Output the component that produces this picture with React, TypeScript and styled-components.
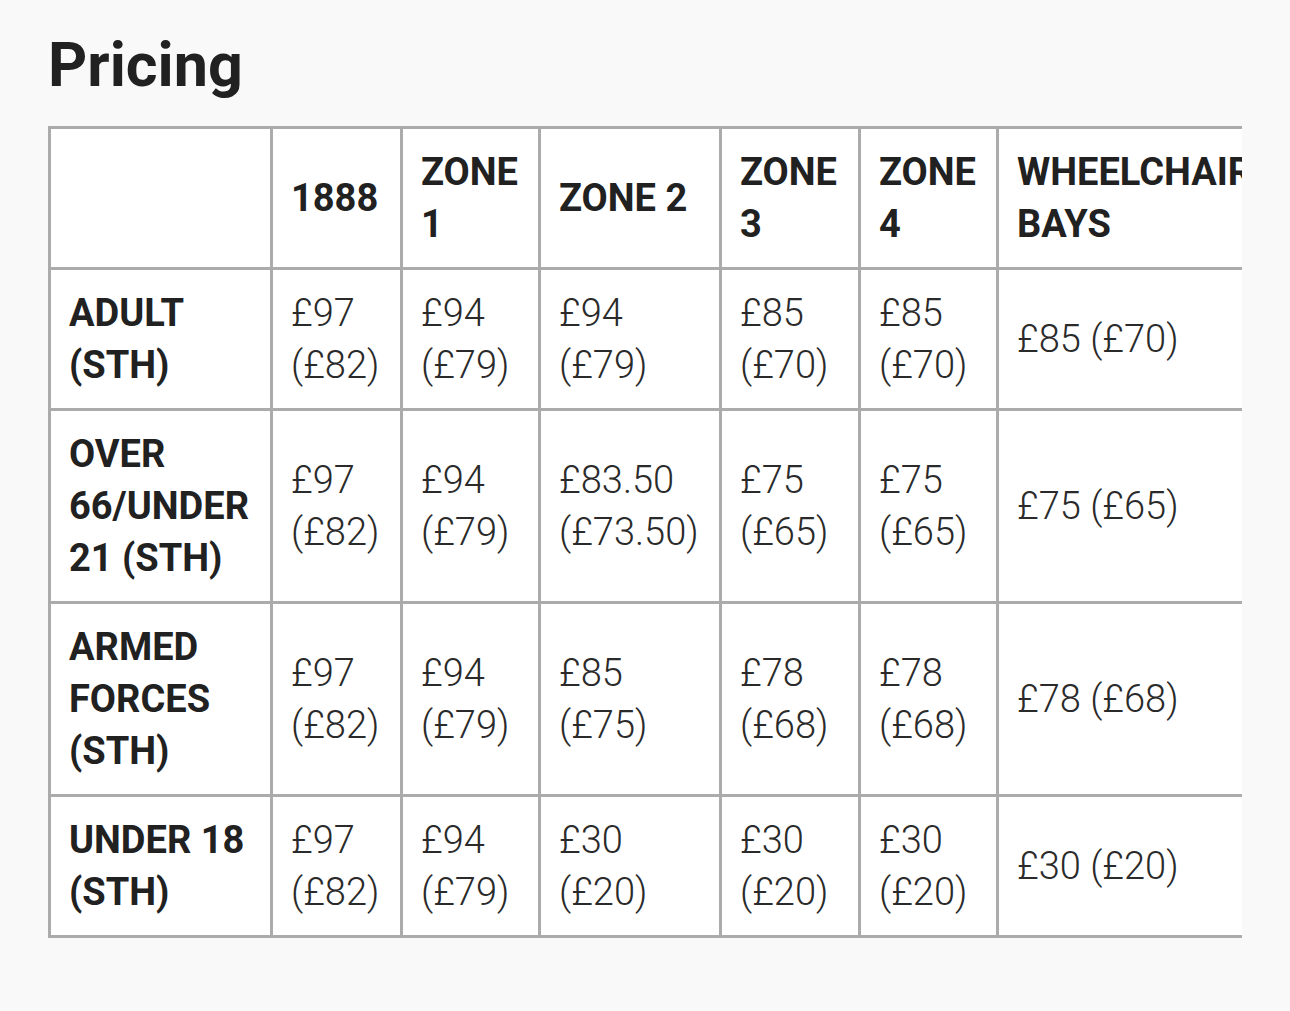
import React from "react";
import styled, { createGlobalStyle } from "styled-components";

const Global = createGlobalStyle`
  html, body { margin: 0; padding: 0; background: #f9f9f9; }
  body { font-family: Roboto, "Liberation Sans", Arial, sans-serif; color: #212121; }
`;

const Page = styled.div`
  padding: 28px 48px 0 48px;
`;

const Title = styled.h1`
  margin: 0 0 24px 0;
  font-family: Roboto, "Liberation Sans", sans-serif;
  font-weight: 700;
  font-size: 61px;
  line-height: 74px;
  color: #212121;
`;

const Scroller = styled.div`
  width: 1194px;
  overflow: hidden;
`;

const Table = styled.table`
  border-collapse: collapse;
  table-layout: fixed;
  width: 1248px;
  background: #ffffff;
`;

const Cell = styled.td<{ $head?: boolean }>`
  border: 3px solid #ababab;
  padding: 17px 18px;
  font-size: 38px;
  line-height: 52px;
  vertical-align: middle;
  text-align: left;
  font-weight: ${(p) => (p.$head ? 700 : 300)};
  color: ${(p) => (p.$head ? "#212121" : "#2a2a2a")};
  overflow: hidden;
`;

const widths = [222, 130, 138, 181, 139, 138, 300];

const headers = ["", "1888", "ZONE 1", "ZONE 2", "ZONE 3", "ZONE 4", "WHEELCHAIR BAYS"];

const rows: string[][] = [
  ["ADULT (STH)", "£97 (£82)", "£94 (£79)", "£94 (£79)", "£85 (£70)", "£85 (£70)", "£85 (£70)"],
  ["OVER 66/UNDER 21 (STH)", "£97 (£82)", "£94 (£79)", "£83.50 (£73.50)", "£75 (£65)", "£75 (£65)", "£75 (£65)"],
  ["ARMED FORCES (STH)", "£97 (£82)", "£94 (£79)", "£85 (£75)", "£78 (£68)", "£78 (£68)", "£78 (£68)"],
  ["UNDER 18 (STH)", "£97 (£82)", "£94 (£79)", "£30 (£20)", "£30 (£20)", "£30 (£20)", "£30 (£20)"],
];

export default function App() {
  return (
    <>
      <Global />
      <Page>
        <Title>Pricing</Title>
        <Scroller>
          <Table>
            <colgroup>
              {widths.map((w, i) => (
                <col key={i} style={{ width: w }} />
              ))}
            </colgroup>
            <thead>
              <tr>
                {headers.map((h, i) => (
                  <Cell as="th" $head key={i}>
                    {h}
                  </Cell>
                ))}
              </tr>
            </thead>
            <tbody>
              {rows.map((r, ri) => (
                <tr key={ri}>
                  {r.map((c, ci) => (
                    <Cell key={ci} $head={ci === 0}>
                      {c}
                    </Cell>
                  ))}
                </tr>
              ))}
            </tbody>
          </Table>
        </Scroller>
      </Page>
    </>
  );
}
